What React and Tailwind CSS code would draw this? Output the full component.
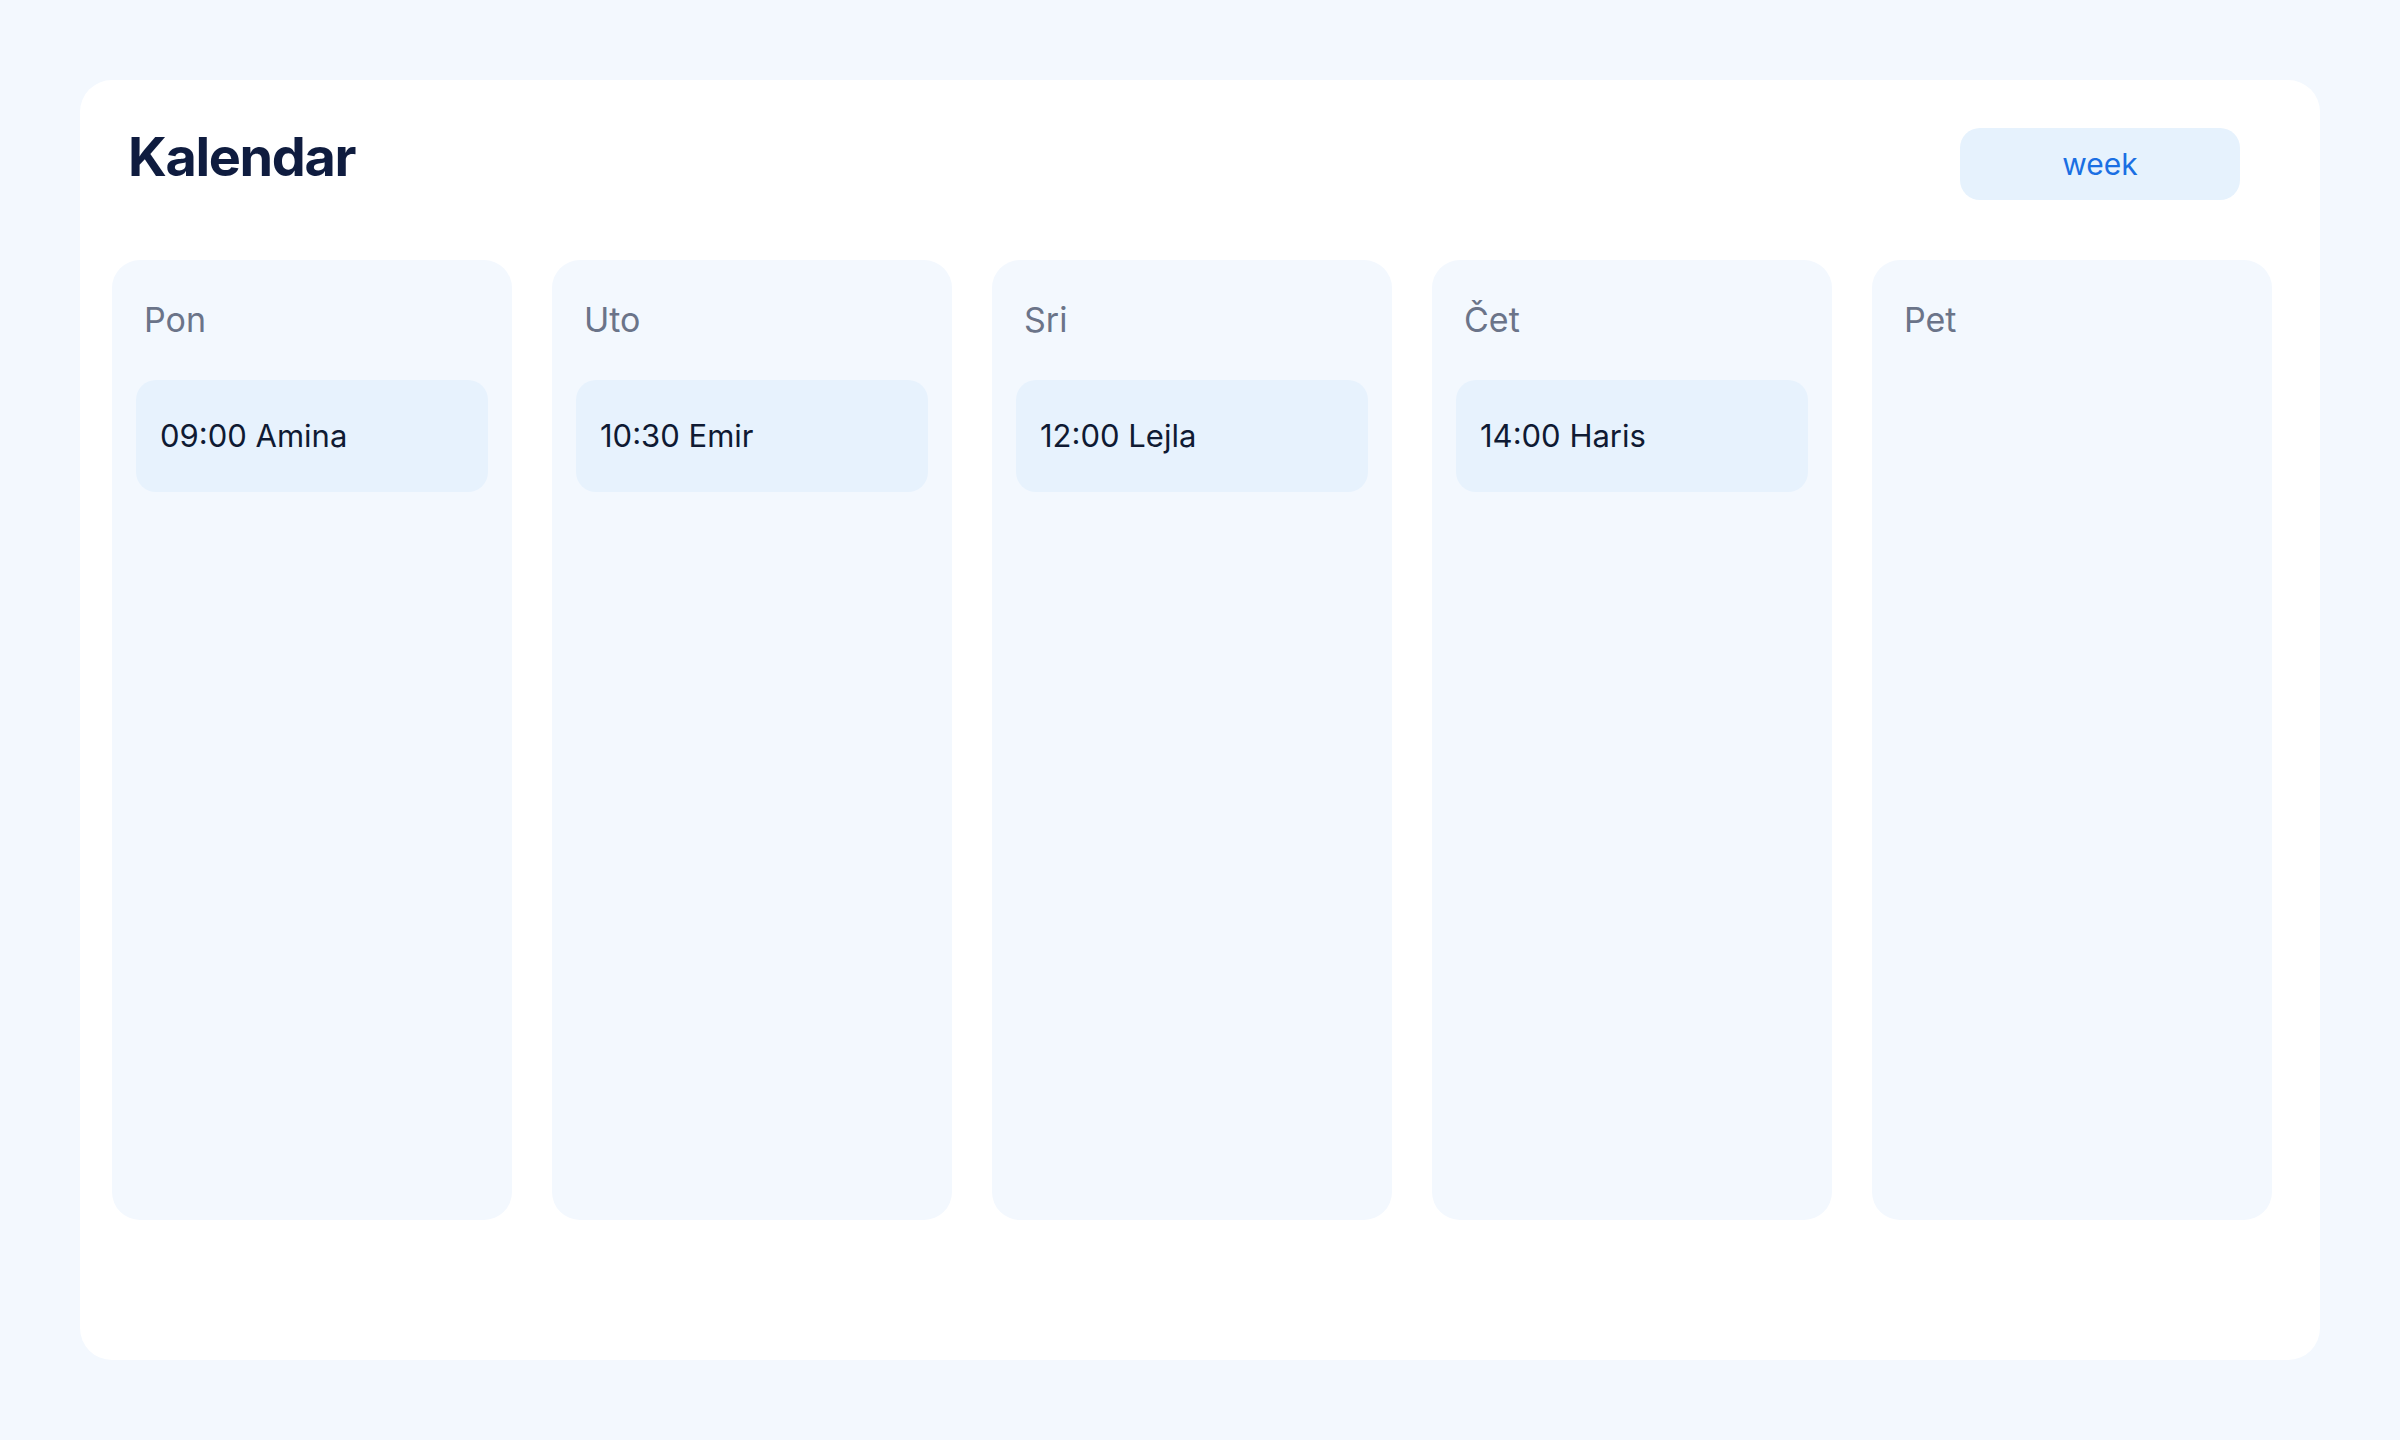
const days = [
  { name: 'Pon', events: ['09:00 Amina'] },
  { name: 'Uto', events: ['10:30 Emir'] },
  { name: 'Sri', events: ['12:00 Lejla'] },
  { name: 'Čet', events: ['14:00 Haris'] },
  { name: 'Pet', events: [] },
];

export default function App() {
  return (
    <div
      className="min-h-screen bg-[#f3f8fe] p-20"
      style={{ fontFamily: 'Inter, "Noto Sans", sans-serif' }}
    >
      <div className="h-[1280px] rounded-[32px] bg-white px-8 py-12">
        {/* Header */}
        <div className="flex items-start justify-between pl-4 pr-12">
          <h1 className="text-[54px] leading-[58px] font-bold tracking-tight text-[#0f1c3f]">Kalendar</h1>
          <button className="h-[72px] w-[280px] rounded-[20px] bg-[#e6f2fd] text-[30px] text-[#1a6fe3]">
            week
          </button>
        </div>

        {/* Week grid */}
        <div className="mt-[60px] grid grid-cols-[repeat(5,400px)] gap-10">
          {days.map((day) => (
            <div key={day.name} className="h-[960px] rounded-[28px] bg-[#f3f8fe] p-6">
              <div className="px-2 pt-3 text-[34px] leading-[48px] text-[#6b7489]">{day.name}</div>
              <div className="mt-9 flex flex-col gap-4">
                {day.events.map((ev) => (
                  <div
                    key={ev}
                    className="h-[112px] rounded-[20px] bg-[#e7f2fd] px-6 py-8 text-[31px] leading-[48px] text-[#0f1a33]"
                  >
                    {ev}
                  </div>
                ))}
              </div>
            </div>
          ))}
        </div>
      </div>
    </div>
  );
}
